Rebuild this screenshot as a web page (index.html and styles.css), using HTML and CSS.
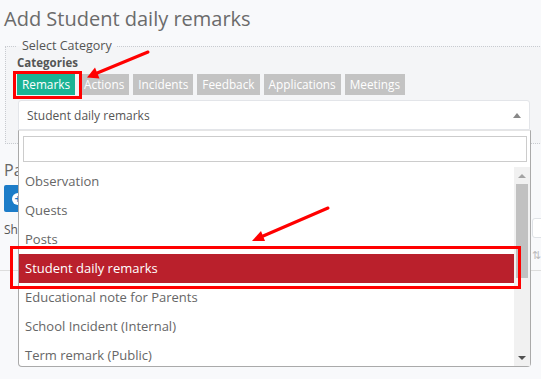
FILE: index.html
```html
<!DOCTYPE html>
<html lang="en">
<head>
    <meta charset="UTF-8">
    <meta name="viewport" content="width=device-width, initial-scale=1.0">
    <title>Add Student daily remarks</title>
    <link rel="stylesheet" href="styles.css">
</head>
<body>
    <div class="page">
        <h1 class="title">Add Student daily remarks</h1>

        <fieldset class="category-box">
            <legend>Select Category</legend>
            <div class="label">Categories</div>
            <div class="tabs">
                <span class="tab active">Remarks</span>
                <span class="tab">Actions</span>
                <span class="tab">Incidents</span>
                <span class="tab">Feedback</span>
                <span class="tab">Applications</span>
                <span class="tab">Meetings</span>
            </div>

            <div class="select">
                <div class="select-value">
                    <span>Student daily remarks</span>
                    <span class="caret"></span>
                </div>
                <div class="dropdown">
                    <input class="search" type="text">
                    <div class="results">
                        <ul class="options">
                            <li>Observation</li>
                            <li>Quests</li>
                            <li>Posts</li>
                            <li class="selected">Student daily remarks</li>
                            <li>Educational note for Parents</li>
                            <li>School Incident (Internal)</li>
                            <li>Term remark (Public)</li>
                        </ul>
                        <div class="scrollbar">
                            <span class="sb-btn"><span class="sb-up"></span></span>
                            <span class="sb-thumb"></span>
                            <span class="sb-space"></span>
                            <span class="sb-btn"><span class="sb-down"></span></span>
                        </div>
                    </div>
                </div>
            </div>
        </fieldset>

        <!-- list below, mostly hidden by the open dropdown -->
        <section class="list">
            <h2>Parent remarks</h2>
            <button class="btn-add"><span class="plus">+</span> Add</button>
            <div class="toolbar">
                <span>Show entries</span>
                <input class="filter" type="text">
            </div>
            <div class="thead">
                <span></span>
                <span class="sort">&#8645;</span>
            </div>
        </section>
    </div>

    <svg class="marks" width="541" height="379" viewBox="0 0 541 379">
        <rect x="14.5" y="72.5" width="66" height="25" fill="none" stroke="#ff0000" stroke-width="3"/>
        <rect x="11.5" y="247.5" width="508" height="40" fill="none" stroke="#ff0000" stroke-width="3"/>
        <line x1="148" y1="52" x2="96" y2="73.5" stroke="#ff0000" stroke-width="3" stroke-linecap="round"/>
        <polygon points="87,77.5 99.5,78.5 95,67.5" fill="#ff0000"/>
        <line x1="328" y1="208" x2="262" y2="236.5" stroke="#ff0000" stroke-width="3" stroke-linecap="round"/>
        <polygon points="252,241 265,241 261,231" fill="#ff0000"/>
    </svg>
</body>
</html>
```

FILE: styles.css
```css
html {
    overflow: hidden;
}
body {
    margin: 0;
    min-height: 379px;
    background: #f8f9fb;
    font-family: "Open Sans", sans-serif;
    position: relative;
}
.page {
    width: 560px;
    padding: 6px 0 0 4px;
}
.title {
    margin: 0;
    font-size: 20px;
    font-weight: 400;
    line-height: 26px;
    color: #6b6b6b;
}
.category-box {
    margin: 5px 0 0 1px;
    padding: 0 0 13px 11px;
    border: 1px dotted #c8cbd0;
    border-right: none;
    background: #f4f5f7;
    min-width: 0;
}
.category-box legend {
    padding: 0 5px;
    font-size: 12.5px;
    line-height: 18px;
    color: #555;
}
.label {
    font-size: 11.5px;
    font-weight: 700;
    line-height: 16px;
    color: #555;
}
.tabs {
    display: flex;
    gap: 4px;
    margin-top: 3px;
}
.tab {
    height: 21px;
    line-height: 21px;
    padding: 0 5px;
    font-size: 11.8px;
    color: #fff;
    background: #c3c3c3;
}
.tab.active {
    background: #1ab394;
}
.select {
    position: relative;
    width: 512px;
    margin: 5px 0 0 1px;
}
.select-value {
    display: flex;
    justify-content: space-between;
    align-items: center;
    height: 30px;
    box-sizing: border-box;
    padding: 0 8px;
    background: #fff;
    border: 1px solid #e3e5e9;
    border-radius: 3px 3px 0 0;
    font-size: 12px;
    color: #555;
}
.caret {
    border-left: 4px solid transparent;
    border-right: 4px solid transparent;
    border-bottom: 5px solid #888;
}
.dropdown {
    position: absolute;
    top: 100%;
    left: 0;
    z-index: 2;
    width: 513px;
    height: 237px;
    box-sizing: border-box;
    padding-top: 5px;
    background: #fff;
    border: 1px solid #aaa;
    border-top-color: #e5e5e5;
    border-radius: 0 0 4px 4px;
}
.search {
    display: block;
    width: calc(100% - 7px);
    height: 26px;
    box-sizing: border-box;
    margin: 0 3px 0 4px;
    border: 1px solid #ccc;
    outline: none;
}
.results {
    display: flex;
    height: 199px;
    margin-top: 5px;
    overflow: hidden;
}
.options {
    flex: 1;
    list-style: none;
    margin: 0;
    padding: 0;
}
.options li {
    height: 29px;
    line-height: 29px;
    padding-left: 6px;
    font-size: 13px;
    color: #666;
    white-space: nowrap;
}
.options li.selected {
    background: #ba202c;
    color: #fff;
}
.scrollbar {
    display: flex;
    flex-direction: column;
    align-items: center;
    width: 16px;
    background: #f1f1f1;
}
.sb-btn {
    display: flex;
    justify-content: center;
    align-items: center;
    height: 17px;
}
.sb-up {
    border-left: 4px solid transparent;
    border-right: 4px solid transparent;
    border-bottom: 4px solid #a3a3a3;
}
.sb-down {
    border-left: 4px solid transparent;
    border-right: 4px solid transparent;
    border-top: 4px solid #505050;
}
.sb-thumb {
    width: 12px;
    height: 94px;
    background: #c1c1c1;
}
.sb-space {
    flex: 1;
}
.list h2 {
    margin: 15px 0 0;
    font-size: 16px;
    font-weight: 400;
    line-height: 22px;
    color: #666;
}
.btn-add {
    display: block;
    height: 27px;
    margin-top: 4px;
    padding: 0 8px;
    border: none;
    border-radius: 2px;
    background: #1c7cc8;
    color: #fff;
    font-family: inherit;
    font-size: 12px;
}
.plus {
    display: inline-block;
    width: 12px;
    height: 12px;
    line-height: 12px;
    border-radius: 50%;
    background: #fff;
    color: #1c7cc8;
    font-weight: 700;
}
.toolbar {
    display: grid;
    grid-template-columns: 528px 200px;
    align-items: end;
    height: 20px;
    margin-top: 6px;
    font-size: 12px;
    color: #555;
}
.filter {
    height: 20px;
    box-sizing: border-box;
    border: 1px solid #dfe2e6;
    border-radius: 3px;
    background: #fff;
}
.thead {
    display: grid;
    grid-template-columns: 532px 40px;
    align-items: center;
    height: 32px;
    margin-left: -4px;
    border-bottom: 1px solid #dddddd;
}
.sort {
    font-size: 11px;
    color: #bbb;
}
.marks {
    position: absolute;
    top: 0;
    left: 0;
    z-index: 5;
    pointer-events: none;
}
```
